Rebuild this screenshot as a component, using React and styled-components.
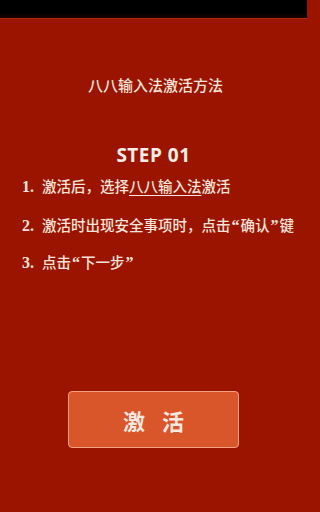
import React from 'react';
import styled, { createGlobalStyle } from 'styled-components';

const GlobalStyle = createGlobalStyle`
  html, body {
    margin: 0;
    padding: 0;
    background: #9a1400;
  }
  body {
    font-family: "Noto Sans CJK SC", "Noto Sans", sans-serif;
  }
`;

const Screen = styled.div`
  display: flex;
  flex-direction: column;
  width: 307px;
  height: 512px;
  background: #9a1400;
  overflow: hidden;
`;

const StatusBar = styled.div`
  height: 19px;
  background: linear-gradient(#000 0%, #000 70%, #1a0200 100%);
  border-bottom: 1px solid #b42a10;
  box-sizing: border-box;
`;

const Title = styled.div`
  margin-top: 56px;
  padding-left: 4px;
  text-align: center;
  font-size: 15px;
  line-height: 20px;
  color: #f6e4dc;
  font-weight: 500;
`;

const Step = styled.div`
  margin-top: 48px;
  text-align: center;
  font-family: "Open Sans", "DejaVu Sans", sans-serif;
  font-weight: 700;
  font-size: 19px;
  line-height: 24px;
  color: #fbeee8;
  letter-spacing: 0.5px;
`;

const List = styled.ol`
  list-style: none;
  margin: 0;
  padding: 0 0 0 22px;
`;

const Item = styled.li`
  font-size: 14.5px;
  line-height: 38px;
  color: #f6e4dc;
  font-weight: 500;
  white-space: nowrap;
  &:last-child {
    line-height: 34px;
  }
`;

const Num = styled.span`
  font-family: "Liberation Serif", serif;
  font-weight: 700;
  font-size: 16px;
  margin-right: 8px;
`;

const Quote = styled.span`
  font-family: "Liberation Serif", serif;
  font-weight: 700;
  font-size: 16px;
  margin: 0 1px;
`;

const Underlined = styled.span`
  text-decoration: underline;
  text-underline-offset: 3px;
`;

const ButtonRow = styled.div`
  display: flex;
  justify-content: center;
  margin-top: 111px;
`;

const ActivateButton = styled.button`
  width: 171px;
  height: 57px;
  background: #d8562a;
  border: 1px solid #f2a283;
  border-radius: 4px;
  color: #fbe9e0;
  font-family: "Noto Sans CJK SC", sans-serif;
  font-size: 22px;
  font-weight: 700;
  letter-spacing: 17px;
  padding: 0 0 0 17px;
  cursor: pointer;
`;

export default function App() {
  return (
    <Screen>
      <GlobalStyle />
      <StatusBar />
      <Title>八八输入法激活方法</Title>
      <Step>STEP 01</Step>
      <List>
        <Item><Num>1.</Num>激活后，选择<Underlined>八八输入法</Underlined>激活</Item>
        <Item><Num>2.</Num>激活时出现安全事项时，点击<Quote>“</Quote>确认<Quote>”</Quote>键</Item>
        <Item><Num>3.</Num>点击<Quote>“</Quote>下一步<Quote>”</Quote></Item>
      </List>
      <ButtonRow>
        <ActivateButton>激活</ActivateButton>
      </ButtonRow>
    </Screen>
  );
}
